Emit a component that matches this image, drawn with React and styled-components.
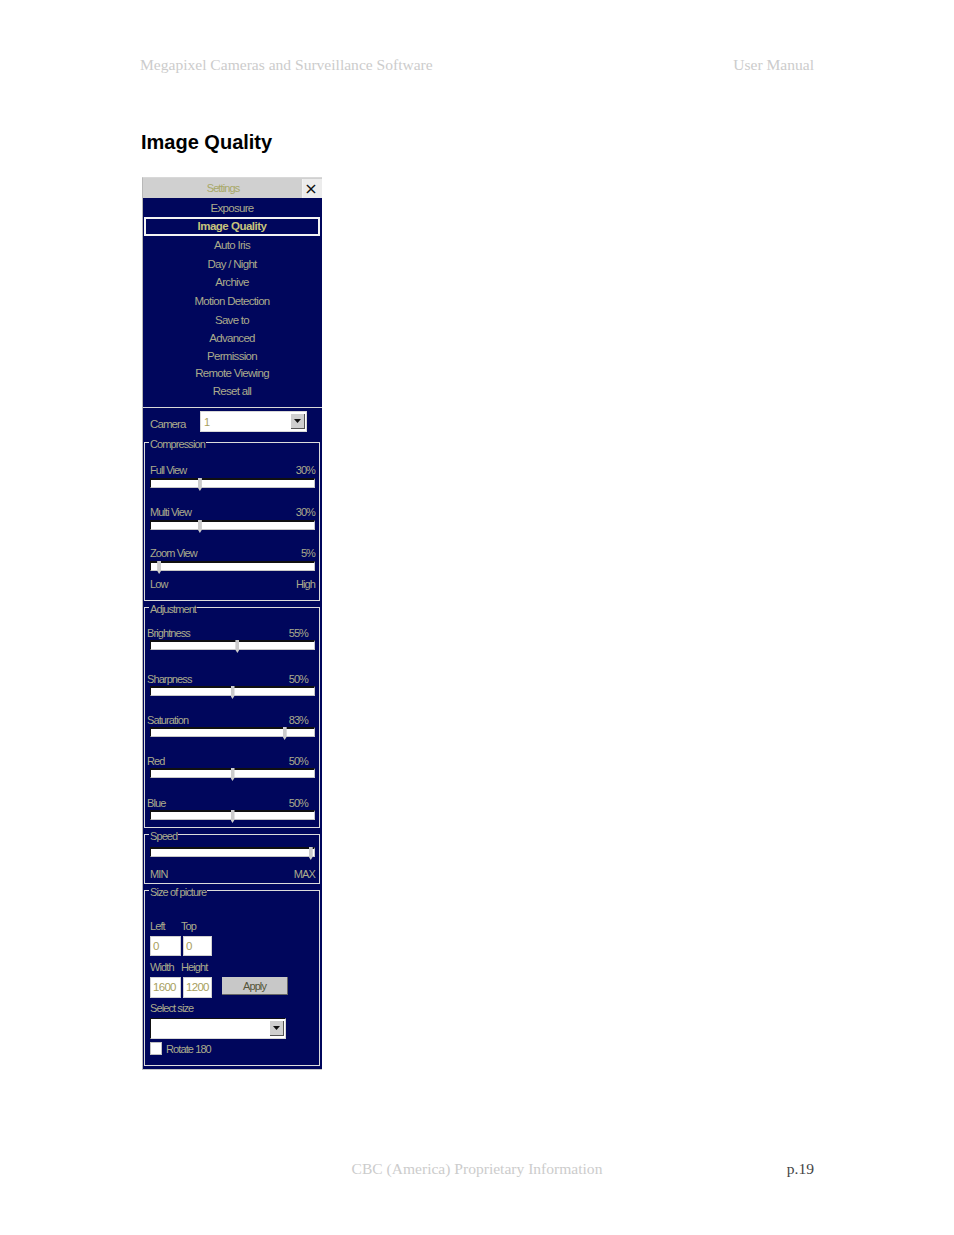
import styled, { createGlobalStyle } from "styled-components"

const GlobalStyle = createGlobalStyle`
    html, body {
        margin: 0;
        padding: 0;
        background: #FFFFFF;
    }
`

const menuItems = [
    { name: "Exposure", height: 18 },
    { name: "Image Quality", height: 19, active: true },
    { name: "Auto Iris", height: 19 },
    { name: "Day / Night", height: 18 },
    { name: "Archive", height: 19 },
    { name: "Motion Detection", height: 19 },
    { name: "Save to", height: 18 },
    { name: "Advanced", height: 18 },
    { name: "Permission", height: 18 },
    { name: "Remote Viewing", height: 17 },
    { name: "Reset all", height: 18 },
]

const compression = [
    { name: "Full View", value: 30, gap: 16 },
    { name: "Multi View", value: 30, gap: 15 },
    { name: "Zoom View", value: 5, gap: 5 },
]

const adjustment = [
    { name: "Brightness", value: 55, pos: 53, gap: 21 },
    { name: "Sharpness", value: 50, gap: 16 },
    { name: "Saturation", value: 83, pos: 82, gap: 16 },
    { name: "Red", value: 50, gap: 17 },
    { name: "Blue", value: 50, gap: 0 },
]

function Arrow() {
    return (
        <DropButton>
            <svg width="7" height="4" viewBox="0 0 7 4">
                <path d="M0 0h7L3.5 4z" fill="#111111" />
            </svg>
        </DropButton>
    )
}

function Slider({ value }) {
    return (
        <Track>
            <Thumb style={{ left: `${value}%` }} />
        </Track>
    )
}

function SliderBlock({ name, value, pos, gap, tight }) {
    return (
        <Block $gap={gap}>
            <LabelRow $tight={tight}>
                <span>{name}</span>
                <span>{value}%</span>
            </LabelRow>
            <Slider value={pos ?? value} />
        </Block>
    )
}

export default function App() {
    return (
        <Page>
            <GlobalStyle />

            <Header>
                <span>Megapixel Cameras and Surveillance Software</span>
                <span>User Manual</span>
            </Header>

            <Title>Image Quality</Title>

            <Panel>
                <TitleBar>
                    <TitleText>Settings</TitleText>
                    <CloseBox>×</CloseBox>
                </TitleBar>

                <Menu>
                    {menuItems.map((item) => (
                        <MenuItem key={item.name} $height={item.height} $active={item.active}>
                            {item.name}
                        </MenuItem>
                    ))}
                </Menu>

                <CameraRow>
                    <Text>Camera</Text>
                    <Select $width={107} $height={21}>
                        <SelectValue>1</SelectValue>
                        <Arrow />
                    </Select>
                </CameraRow>

                <Group $height={159}>
                    <Legend>Compression</Legend>
                    <GroupBody $top={19}>
                        {compression.map((item) => (
                            <SliderBlock key={item.name} {...item} />
                        ))}
                        <LabelRow>
                            <span>Low</span>
                            <span>High</span>
                        </LabelRow>
                    </GroupBody>
                </Group>

                <Group $height={221}>
                    <Legend>Adjustment</Legend>
                    <GroupBody $top={17}>
                        {adjustment.map((item) => (
                            <SliderBlock key={item.name} {...item} tight />
                        ))}
                    </GroupBody>
                </Group>

                <Group $height={50}>
                    <Legend>Speed</Legend>
                    <GroupBody $top={12}>
                        <Slider value={98} />
                        <LabelRow $spaced>
                            <span>MIN</span>
                            <span>MAX</span>
                        </LabelRow>
                    </GroupBody>
                </Group>

                <Group $height={176} $last>
                    <Legend>Size of picture</Legend>
                    <SizeBody>
                        <FieldRow>
                            <FieldLabel $width={28}>Left</FieldLabel>
                            <FieldLabel $width={29}>Top</FieldLabel>
                        </FieldRow>
                        <FieldRow>
                            <Input $width={31}>0</Input>
                            <Input $width={29}>0</Input>
                        </FieldRow>
                        <FieldRow $gapTop={4}>
                            <FieldLabel $width={28}>Width</FieldLabel>
                            <FieldLabel $width={29}>Height</FieldLabel>
                        </FieldRow>
                        <FieldRow>
                            <Input $width={31} $tall>1600</Input>
                            <Input $width={29} $tall>1200</Input>
                            <ApplyButton>Apply</ApplyButton>
                        </FieldRow>
                        <FieldLabel $gapTop={3}>Select size</FieldLabel>
                        <Select $width={136} $height={21} $dark>
                            <SelectValue />
                            <Arrow />
                        </Select>
                        <CheckRow>
                            <CheckBox />
                            <span>Rotate 180</span>
                        </CheckRow>
                    </SizeBody>
                </Group>
            </Panel>

            <Footer>
                <span />
                <FooterText>CBC (America) Proprietary Information</FooterText>
                <PageNumber>p.19</PageNumber>
            </Footer>
        </Page>
    )
}

const Page = styled.div`
    width: 954px;
    height: 1235px;
    box-sizing: border-box;
    padding: 56px 140px 0 140px;
    display: flex;
    flex-direction: column;
    overflow: hidden;
`

const Header = styled.div`
    display: flex;
    justify-content: space-between;
    font-family: "Liberation Serif", serif;
    font-size: 15.55px;
    line-height: 17px;
    color: #CCCCCC;
`

const Title = styled.h1`
    margin: 57px 0 0 1px;
    font-family: "Liberation Sans", sans-serif;
    font-size: 20px;
    line-height: 24px;
    font-weight: bold;
    color: #000000;
`

const Panel = styled.div`
    width: 180px;
    height: 893px;
    margin: 23px 0 0 2px;
    box-sizing: border-box;
    background: #00065C;
    border-top: 1px solid #D8D8D8;
    border-left: 1px solid #B8B8B8;
    border-bottom: 1px solid #C8C8C8;
    display: flex;
    flex-direction: column;
    flex-shrink: 0;
    font-family: "Liberation Sans", sans-serif;
    font-size: 11px;
    letter-spacing: -0.9px;
    color: #ABAB8C;
`

const TitleBar = styled.div`
    height: 20px;
    flex-shrink: 0;
    display: flex;
    align-items: center;
    background: #D0D0D0;
`

const TitleText = styled.div`
    flex: 1;
    text-align: center;
    color: #A8A868;
    height: 19px;
    line-height: 19px;
    border-right: 1px solid #F2F2F2;
    padding-left: 1px;
`

const CloseBox = styled.div`
    width: 19px;
    box-sizing: border-box;
    padding-right: 3px;
    text-align: center;
    font-family: "DejaVu Sans", sans-serif;
    font-size: 16px;
    line-height: 19px;
    letter-spacing: 0;
    color: #111111;
    background: #ECECEC;
`

const Menu = styled.div`
    height: 210px;
    flex-shrink: 0;
    box-sizing: border-box;
    padding: 1px 1px 0 0;
    border-bottom: 1px solid #D8D8D8;
    font-size: 11.5px;
`

const MenuItem = styled.div`
    height: ${(props) => props.$height}px;
    line-height: ${(props) => props.$height - (props.$active ? 4 : 0)}px;
    text-align: center;
    box-sizing: border-box;
    color: ${(props) => (props.$active ? "#C8C47C" : "#ABAB8C")};
    font-weight: ${(props) => (props.$active ? "bold" : "normal")};
    letter-spacing: ${(props) => (props.$active ? "-0.5px" : "-0.7px")};
    border: ${(props) => (props.$active ? "2px solid #F4F4F4" : "none")};
    margin: 0 ${(props) => (props.$active ? "1px" : "0")};
`

const CameraRow = styled.div`
    height: 34px;
    flex-shrink: 0;
    display: flex;
    align-items: flex-start;
    box-sizing: border-box;
    padding: 3px 0 0 7px;
    gap: 16px;
`

const Text = styled.span`
    width: 34px;
    padding-top: 7px;
    font-size: 11.5px;
`

const Select = styled.div`
    width: ${(props) => props.$width}px;
    height: ${(props) => props.$height}px;
    flex-shrink: 0;
    box-sizing: border-box;
    background: #FFFFFF;
    border: 1px solid #D8D8D8;
    border-top-color: ${(props) => (props.$dark ? "#111111" : "#D8D8D8")};
    border-left-color: ${(props) => (props.$dark ? "#111111" : "#D8D8D8")};
    display: flex;
    align-items: center;
    justify-content: space-between;
    padding: 1px;
    color: #A8A060;
`

const SelectValue = styled.span`
    padding-left: 2px;
`

const DropButton = styled.div`
    width: 14px;
    height: 15px;
    background: #CFCFCF;
    border-right: 1px solid #555555;
    border-bottom: 1px solid #555555;
    box-sizing: border-box;
    display: flex;
    align-items: center;
    justify-content: center;
`

const Group = styled.div`
    position: relative;
    height: ${(props) => props.$height}px;
    box-sizing: border-box;
    flex-shrink: 0;
    border: 1px solid #DCDCDC;
    margin: 0 2px ${(props) => (props.$last ? 0 : 6)}px 1px;
`

const Legend = styled.div`
    position: absolute;
    top: -6px;
    left: 4px;
    padding: 0 1px;
    line-height: 14px;
    background: #00065C;
`

const GroupBody = styled.div`
    padding: ${(props) => props.$top}px 4px 0 5px;
    display: flex;
    flex-direction: column;
`

const Block = styled.div`
    margin-bottom: ${(props) => props.$gap}px;
`

const LabelRow = styled.div`
    display: flex;
    justify-content: space-between;
    height: 14px;
    line-height: 16px;
    padding-top: ${(props) => (props.$spaced ? "9px" : "0")};
    margin-left: ${(props) => (props.$tight ? "-3px" : "0")};
    padding-right: ${(props) => (props.$tight ? "7px" : "0")};
    margin-bottom: ${(props) => (props.$tight ? "1px" : "2px")};
`

const Track = styled.div`
    position: relative;
    height: 10px;
    background: #FFFFFF;
    border-top: 2px solid #101010;
    border-left: 1px solid #101010;
    border-bottom: 1px solid #C8C8C8;
    border-right: 1px solid #C8C8C8;
    box-sizing: border-box;
`

const Thumb = styled.div`
    position: absolute;
    top: -2px;
    width: 4px;
    height: 13px;
    margin-left: -2px;
    background: #CCCCCC;
    clip-path: polygon(0 0, 100% 0, 100% 75%, 50% 100%, 0 75%);
`

const SizeBody = styled.div`
    padding: 28px 0 0 5px;
    display: flex;
    flex-direction: column;
`

const FieldRow = styled.div`
    display: flex;
    align-items: center;
    gap: 2px;
    margin-top: ${(props) => props.$gapTop || 0}px;
`

const FieldLabel = styled.div`
    width: ${(props) => (props.$width ? `${props.$width}px` : "auto")};
    height: 15px;
    line-height: 15px;
    margin-top: ${(props) => props.$gapTop || 0}px;
    margin-bottom: 2px;
    margin-right: ${(props) => (props.$width ? "1px" : "0")};
    white-space: nowrap;
`

const Input = styled.div`
    width: ${(props) => props.$width}px;
    height: ${(props) => (props.$tall ? 21 : 20)}px;
    box-sizing: border-box;
    background: #FFFFFF;
    border: 1px solid #D0D0D0;
    line-height: 18px;
    padding-left: 2px;
    color: #A8A060;
    font-size: 11.5px;
    letter-spacing: -0.7px;
`

const ApplyButton = styled.div`
    width: 66px;
    height: 18px;
    margin: 0 0 3px 8px;
    background: #C8C8C8;
    border-right: 1px solid #666666;
    border-bottom: 1px solid #666666;
    box-sizing: border-box;
    text-align: center;
    line-height: 18px;
    color: #55553A;
`

const CheckRow = styled.div`
    display: flex;
    align-items: center;
    gap: 4px;
    margin-top: 3px;
`

const CheckBox = styled.div`
    width: 12px;
    height: 13px;
    background: #FFFFFF;
    border: 1px solid #C0C0C0;
    box-sizing: border-box;
`

const Footer = styled.div`
    display: grid;
    grid-template-columns: 1fr auto 1fr;
    margin-top: 90px;
    font-family: "Liberation Serif", serif;
    font-size: 15.55px;
    line-height: 17px;
`

const FooterText = styled.span`
    color: #CCCCCC;
`

const PageNumber = styled.span`
    justify-self: end;
    color: #444444;
`
